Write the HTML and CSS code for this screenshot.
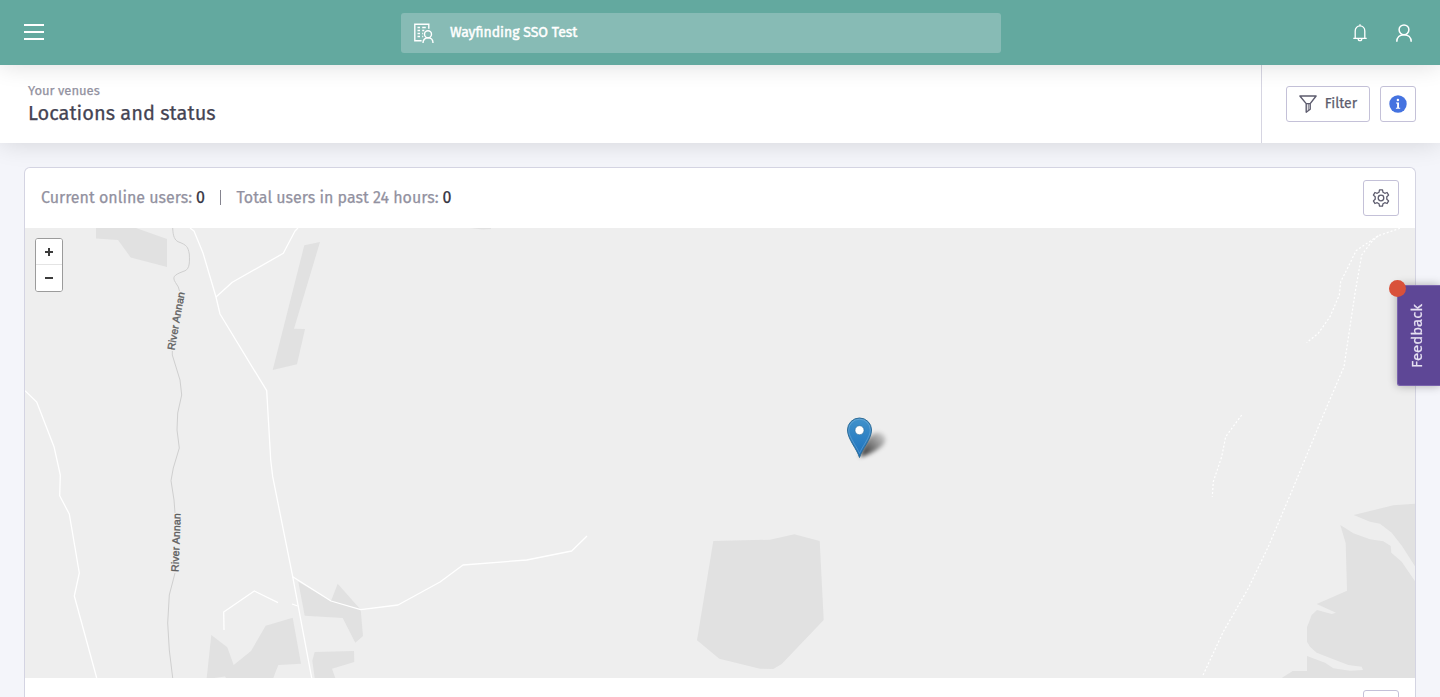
FILE: index.html
```html
<!DOCTYPE html>
<html lang="en">
<head>
<meta charset="utf-8">
<title>Locations and status</title>
<link rel="stylesheet" href="styles.css">
</head>
<body>
<header class="topbar">
  <button class="icon-btn menu" aria-label="Menu"><span></span><span></span><span></span></button>
  <div class="venue-picker">
    <svg width="20" height="20" viewBox="0 0 20 20" fill="none" stroke="#fff" stroke-width="1.4">
      <path d="M7.600 17.800H.8V1.200h14v4.500M3.500 4.500h2.500M8.200 4.500h3.600M3.500 7.500h2.500M8.200 7.500h2.100M3.500 10.500h2.500M8.200 10.500h1M3.500 13.500h2.500M8.200 13.500h1"/>
      <circle cx="14" cy="11.300" r="3.500"/>
      <path d="M9 20c0-3.200 2-5.100 5-5.100s5 1.900 5 5.100"/>
    </svg>
    <span class="venue-name">Wayfinding SSO Test</span>
  </div>
  <div class="top-actions">
    <svg width="14" height="18" viewBox="0 0 14 18" fill="none" stroke="#fff" stroke-width="1.3">
      <path d="M.3 14.3h13.4M2.2 14.2V7.1C2.2 4 4.2 1.9 7 1.9s4.8 2.1 4.8 5.2v7.1M7 .2v1.7M5.2 14.7c0 1.2.7 2 1.8 2s1.8-.8 1.8-2"/>
    </svg>
    <svg width="16" height="18" viewBox="0 0 16 18" fill="none" stroke="#fff" stroke-width="1.5">
      <circle cx="8" cy="5.8" r="4.9"/>
      <path d="M.8 17.8c0-4.4 2.9-7.1 7.2-7.1s7.2 2.7 7.2 7.1"/>
    </svg>
  </div>
</header>

<section class="page-head">
  <div class="titles">
    <div class="eyebrow">Your venues</div>
    <h1 class="title">Locations and status</h1>
  </div>
  <div class="head-actions">
    <button class="btn filter">
      <svg width="18" height="18" viewBox="0 0 18 18" fill="none" stroke="#5d5c6e" stroke-width="1.4" stroke-linejoin="round">
        <path d="M.9 1h16.200l-5.900 7.600v5.600l-4 3V8.600zM7 8.600h4.200"/>
        <path d="M9.300 9v6" stroke-width=".8"/>
      </svg>
      <span class="filter-label">Filter</span>
    </button>
    <button class="btn square" aria-label="Information">
      <svg width="18" height="18" viewBox="0 0 18 18">
        <circle cx="9" cy="9" r="8.7" fill="#4573e0"/>
        <circle cx="8.900" cy="5" r="1.200" fill="#fff"/>
        <path d="M7 7.500h3v5.200h1.200v1H6.900v-1h1.200V8.500H7z" fill="#fff"/>
      </svg>
    </button>
  </div>
</section>

<main class="content">
  <section class="card">
    <div class="card-head">
      <div class="stats">
        <span>Current online users:</span><span class="num">0</span>
        <span class="divider"></span>
        <span>Total users in past 24 hours:</span><span class="num">0</span>
      </div>
      <button class="btn square" aria-label="Settings">
        <svg width="18" height="18" viewBox="0 0 18 18" fill="none" stroke="#5d5c6e" stroke-width="1.3" stroke-linejoin="round">
          <path d="M7.500.9h3l.5 2.400 1.800 1 2.300-.8 1.500 2.600-1.800 1.700v2.400l1.800 1.700-1.500 2.600-2.300-.8-1.800 1-.5 2.400h-3L7 14.700l-1.800-1-2.300.8-1.500-2.600 1.800-1.700V7.800L1.400 6.100l1.500-2.600 2.300.8 1.800-1z"/>
          <circle cx="9" cy="9" r="2.800"/>
        </svg>
      </button>
    </div>
    <div class="map">
      <svg class="map-canvas" width="1390" height="450" viewBox="25 228 1390 450">
        <defs>
          <linearGradient id="pin" x1="0" y1="0" x2="0" y2="1">
            <stop offset="0" stop-color="#4192cb"/><stop offset="1" stop-color="#1b71bd"/>
          </linearGradient>
          <linearGradient id="shade" x1="0" y1="1" x2="1" y2="0">
            <stop offset="0" stop-color="#000" stop-opacity=".85"/><stop offset="1" stop-color="#000" stop-opacity=".08"/>
          </linearGradient>
          <filter id="soft" x="-50%" y="-50%" width="200%" height="200%"><feGaussianBlur stdDeviation="2"/></filter>
        </defs>
        <g fill="#e1e1e1">
          <path d="M96 228V238.500L118 240L130.700 257.500L167 267V239L136 228Z"/>
          <path d="M470 228H491V229L483 229.500Z"/>
          <path d="M304.300 245.300L320 242L294 328.700L305 329L297 364.300L272.700 370Z"/>
          <path d="M298.300 581.700L331 601L337.700 583.700L360.700 609.700L363 636L355.300 642.700L342.700 618L304.700 615.700Z"/>
          <path d="M211.300 635L227.300 647.300L233.700 665L251 651L265.700 625.700L292.700 617.700L301 663.700L278.300 665L273.300 678H206.700Z"/>
          <path d="M314.700 652L354 651L354.300 662L332 668.700L335.300 678H314.700L312.300 660.700Z"/>
          <path d="M713.300 541L770 539.700L794.300 534.300L819.700 541L823.700 620L781.700 664L773.300 669L760 668.700L719.300 658.700L697 640.300Z"/>
          <path d="M1353.700 515L1393.300 505.300L1415 503.700V566.300L1402 546L1391.700 532.700L1380 523.700L1370 521.700Z"/>
          <path d="M1340.300 525L1353.300 533.300L1370 539.300L1383.300 541.300L1390.700 546L1391.300 552.700L1401.700 561.700L1415 581.300V678H1281.700L1292.700 671H1307V656L1325 662.700L1333.300 668.300L1350 670.700L1363 670L1361.700 666.700L1348.300 665L1316.700 652.700L1310 646.700L1307 641.700V627.300L1311.700 615L1317 610L1331.700 614L1336 612.700L1316.700 604L1347 590.700L1345.700 543.300Z"/>
        </g>
        <path d="M214 678L225 676.500L226 678Z" fill="#eee"/>
        <g fill="none" stroke="#cfcfcf" stroke-width="1">
          <path d="M172.700 228C173 237 175 240 178 241.700C187 245 188 247 189.300 254C190 265 189 270 183 271.500C174 275 172 277 175.500 282.500Q179 287 179.500 291M172.300 351V355L180 380L181.700 395L177.700 413L177 430L179.300 448L173.300 468L171 480.700L174 500L175 513M175 573L169.300 595L167.700 623L169.300 650L172.700 678"/>
        </g>
        <g fill="none" stroke="#fff" stroke-width="1.300" stroke-linejoin="round">
          <path d="M190 228L194 231L203 253L216 297L220 314L266.700 390.700L270.700 460L272.700 476.700L292.700 576.700L311.700 678"/>
          <path d="M216 297L232.300 282.300L283.300 253.300L295 231L298 228"/>
          <path d="M25 390.700L36.700 402L54 446.700L60.300 475L59.700 495.700L69.300 514L79.300 573L74.300 596L96.700 678"/>
          <path d="M224 630L223.700 612L254.300 591L278 602.700M292 604L297.700 606"/>
          <path d="M292.700 576.700L331 601L360.700 609.700L398 605L440 582L463 565L526.700 560L571.700 551L587 536"/>
        </g>
        <g fill="none" stroke="#fff" stroke-width="1.200" stroke-dasharray="2 2">
          <path d="M1400 228.300L1378.300 235.700L1356 250.700L1350 263.300L1340.700 281.700L1339.300 295L1330 316.700L1318.300 333.300L1306.700 342.700"/>
          <path d="M1378.300 235.700L1371.700 241.700L1361.700 255L1355 293.300L1344 366.700L1323.300 415L1292.300 490L1268.300 546.700L1248.300 588.300L1223.300 631.700L1202.300 676.700"/>
          <path d="M1241.700 415L1225.700 436.700L1221.700 456.700L1213.300 481.700L1212.300 496.700"/>
        </g>
        <text class="river" transform="translate(174.500 350.500) rotate(-80)">River Annan</text>
        <text class="river" transform="translate(178.500 572) rotate(-88)">River Annan</text>
        <path d="M860 457C863 446 868 434 877 432.500C886 433 888 441 882 446C875 452 867 455 860 457Z" fill="url(#shade)" filter="url(#soft)"/>
        <path d="M859.500 457.500C857 449 847.500 439 847.500 430A12 12 0 0 1 871.500 430C871.500 439 862 449 859.500 457.500Z" fill="url(#pin)" stroke="#2e6c97" stroke-width="1"/>
        <path d="M859.500 453.500C857 446.500 848.700 437.500 848.700 430A10.800 10.800 0 0 1 870.300 430C870.300 437.500 862 446.500 859.500 453.500Z" fill="none" stroke="#fff" stroke-opacity=".18"/>
        <circle cx="859.500" cy="430.200" r="4.500" fill="#fff" stroke="#2e6c97" stroke-width=".6"/>
      </svg>
      <div class="zoom-control">
        <button class="zoom-btn zoom-in" aria-label="Zoom in"><svg width="8" height="8" viewBox="0 0 8 8"><path d="M3 0h2v3h3v2H5v3H3V5H0V3h3z" fill="#3c3c3c"/></svg></button>
        <button class="zoom-btn" aria-label="Zoom out"><svg width="8" height="8" viewBox="0 0 8 8"><path d="M0 3h8v2H0z" fill="#3c3c3c"/></svg></button>
      </div>
    </div>
    <div class="card-foot"><button class="btn square" aria-label="Options"></button></div>
  </section>
</main>

<aside class="feedback"><span class="feedback-dot"></span><span class="feedback-label">Feedback</span></aside>
</body>
</html>
```
FILE: styles.css
```css
* { box-sizing: border-box; }
body {
  display: flex;
  flex-direction: column;
  margin: 0;
  height: 697px;
  overflow: hidden;
  background: #f4f5fa;
  color: #454453;
  font-family: "Fira Sans", "Noto Sans", sans-serif;
  -webkit-text-stroke: .25px currentColor;
}
button { font: inherit; color: inherit; padding: 0; margin: 0; }
svg { display: block; flex: none; }

.topbar {
  position: relative;
  z-index: 3;
  flex: none;
  display: grid;
  grid-template-columns: 377px 600px 1fr;
  align-items: center;
  height: 65px;
  padding: 0 28px 0 24px;
  background: #63a99f;
  box-shadow: 0 0 24px rgba(0, 0, 0, .14);
}
.icon-btn { border: 0; background: none; }
.menu { display: flex; flex-direction: column; gap: 5px; width: 20px; padding-bottom: 1px; }
.menu span { height: 2px; background: #fff; }
.venue-picker {
  display: flex;
  align-items: center;
  gap: 16px;
  height: 40px;
  padding-left: 13px;
  border-radius: 3px;
  background: #87bbb5;
  color: #fff;
}
.venue-name { font-size: 14px; -webkit-text-stroke-width: .45px; white-space: nowrap; }
.top-actions { display: flex; justify-content: flex-end; align-items: center; gap: 29px; }

.page-head {
  position: relative;
  z-index: 2;
  flex: none;
  display: flex;
  justify-content: space-between;
  height: 78px;
  background: #fff;
  box-shadow: 0 0 24px rgba(0, 0, 0, .14);
}
.titles { padding: 17px 0 0 28px; white-space: nowrap; }
.eyebrow { font-size: 13px; line-height: 18px; color: #9291a0; }
.title { margin: 0; font-size: 20px; line-height: 26px; font-weight: 400; }
.head-actions {
  display: flex;
  align-items: center;
  gap: 10px;
  padding: 0 24px;
  border-left: 1px solid #d6d5e2;
}
.btn {
  display: flex;
  align-items: center;
  justify-content: center;
  height: 36px;
  border: 1px solid #c4c1d8;
  border-radius: 3px;
  background: #fff;
}
.square { width: 36px; }
.filter { width: 84px; gap: 8px; color: #5d5c6e; -webkit-text-stroke: .25px #5d5c6e; }
.filter-label { font-size: 14px; font-weight: 400; line-height: 18px; }

.content { flex: 1; min-height: 0; padding: 24px 24px 0; overflow: hidden; }
.card {
  height: 530px;
  border: 1px solid #d4d4e2;
  border-bottom: 0;
  border-radius: 6px 6px 0 0;
  background: #fff;
  overflow: hidden;
}
.card-head {
  display: flex;
  align-items: center;
  justify-content: space-between;
  height: 60px;
  padding: 0 16px;
}
.stats { display: flex; align-items: center; padding-bottom: 1px; font-size: 16px; white-space: nowrap; color: #9291a0; }
.num { margin-left: 4px; color: #353442; }
.divider { width: 1.500px; height: 15px; margin: 0 15px; background: #85848f; }
.map { position: relative; height: 450px; background: #eee; }
.river {
  font: 500 10.500px "Liberation Sans", sans-serif;
  fill: #606060;
  stroke: #606060;
  stroke-width: .35px;
  letter-spacing: .15px;
}
.zoom-control {
  position: absolute;
  top: 10px;
  left: 10px;
  width: 28px;
  border: 1px solid #9b9b9b;
  border-radius: 3px;
  background: #fff;
  overflow: hidden;
}
.zoom-btn {
  display: flex;
  align-items: center;
  justify-content: center;
  width: 26px;
  height: 26px;
  border: 0;
  background: #fff;
}
.zoom-in { border-bottom: 1px solid #e4e4e4; }
.card-foot { display: flex; justify-content: flex-end; padding: 12px 16px; }

.feedback {
  position: absolute;
  z-index: 4;
  top: 285px;
  right: 0;
  display: flex;
  align-items: center;
  justify-content: center;
  width: 43px;
  height: 101px;
  padding-right: 5px;
  border: 1px solid #7a64ad;
  border-right: 0;
  border-radius: 3px 0 0 3px;
  background: #5e4796;
  box-shadow: 0 0 10px rgba(0, 0, 0, .3);
  color: #e6e1f2;
}
.feedback-label { writing-mode: vertical-rl; transform: rotate(180deg); font-size: 15px; line-height: 20px; -webkit-text-stroke: .2px #e6e1f2; }
.feedback-dot {
  position: absolute;
  top: -6.500px;
  left: -9px;
  width: 17px;
  height: 17px;
  border-radius: 50%;
  background: #d9513a;
}
```
